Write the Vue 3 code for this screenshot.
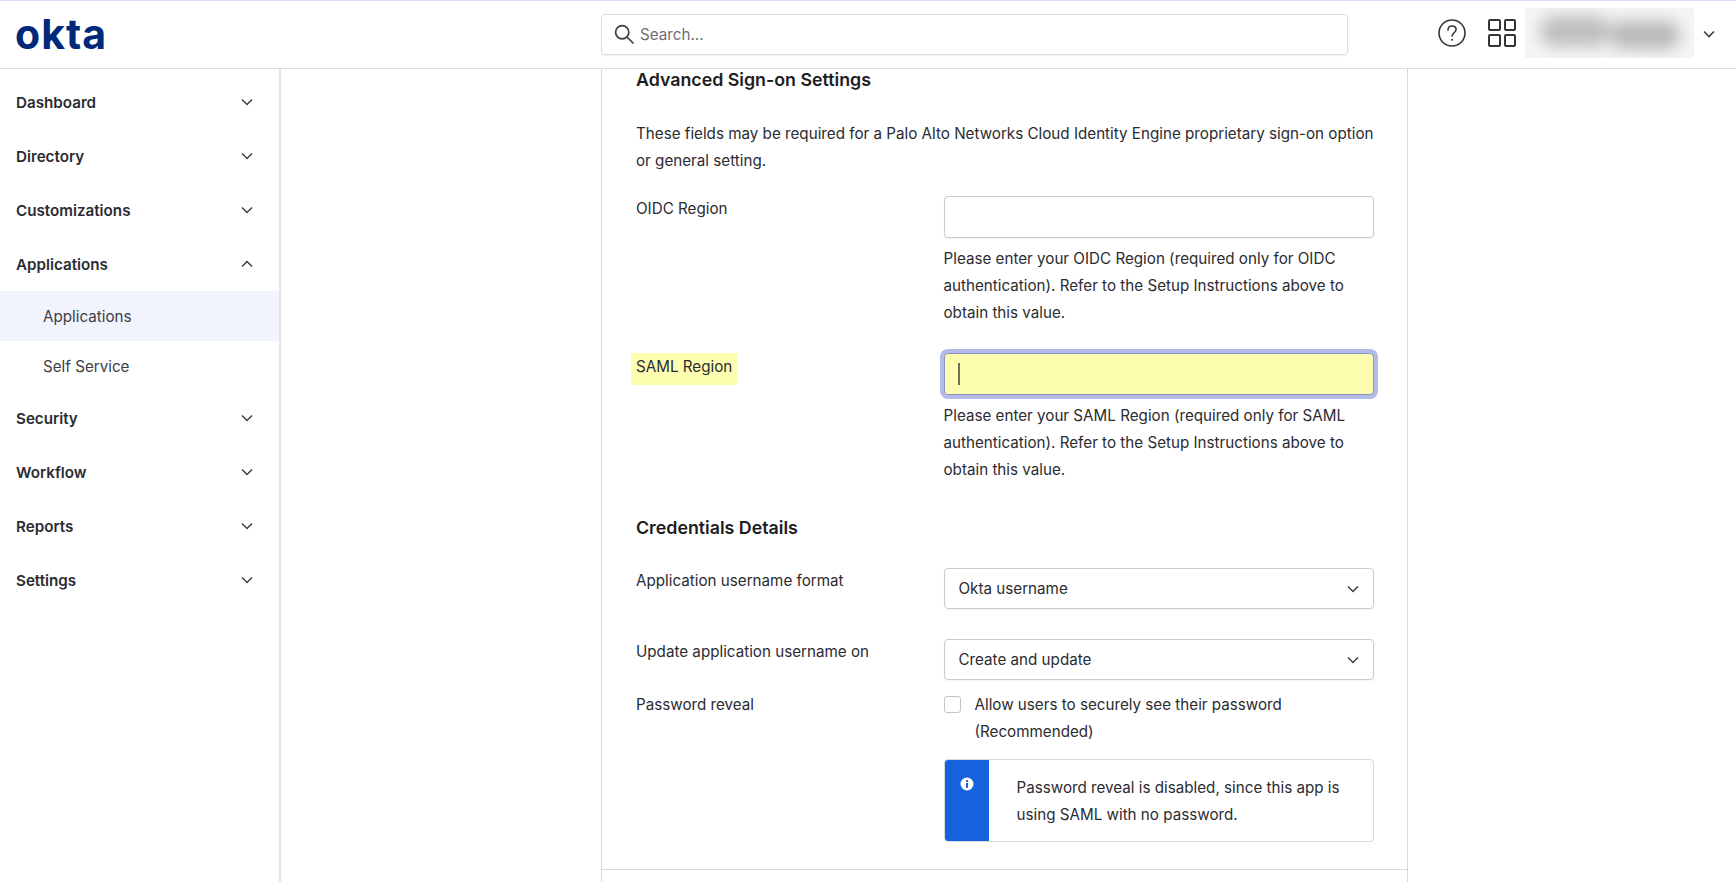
<script setup>
const navTop = [
  { label: 'Dashboard' },
  { label: 'Directory' },
  { label: 'Customizations' },
]
const navBottom = [
  { label: 'Security' },
  { label: 'Workflow' },
  { label: 'Reports' },
  { label: 'Settings' },
]
</script>

<template>
  <div class="page">
    <header class="topbar">
      <div class="logo">okta</div>
      <div class="search">
        <svg class="search-icon" viewBox="0 0 20 20" fill="none" stroke="#3c3f47" stroke-width="1.7">
          <circle cx="8.2" cy="8.2" r="6.6" />
          <path d="M13 13l6 6" stroke-linecap="round" />
        </svg>
        <span>Search...</span>
      </div>
      <div class="top-actions">
        <svg class="help-icon" viewBox="0 0 28 28" fill="none" stroke="#33353b">
          <circle cx="14" cy="14" r="13" stroke-width="1.6" />
          <path d="M10 11c0-2.400 1.800-4 4.100-4s4 1.500 4 3.600c0 3-4 3.300-4 6.400" stroke-width="1.6" stroke-linecap="round" />
          <circle cx="14.100" cy="20.700" r="1" fill="#33353b" stroke="none" />
        </svg>
        <div class="apps">
          <span></span><span></span><span></span><span></span>
        </div>
        <div class="user-box">
          <div class="user-blur">
            <span class="blob-a"></span>
            <span class="blob-b"></span>
          </div>
        </div>
        <svg class="chev user-chev" viewBox="0 0 12 8" fill="none" stroke="#3c3f47" stroke-width="1.6">
          <path d="M1 1.500l5 5 5-5" />
        </svg>
      </div>
    </header>

    <div class="body-row">
      <nav class="sidebar">
        <div v-for="item in navTop" :key="item.label" class="nav-item">
          <span>{{ item.label }}</span>
          <svg class="chev" viewBox="0 0 12 8" fill="none" stroke="#3c3f47" stroke-width="1.500"><path d="M1 1.500l5 5 5-5" /></svg>
        </div>
        <div class="nav-item">
          <span>Applications</span>
          <svg class="chev" viewBox="0 0 12 8" fill="none" stroke="#3c3f47" stroke-width="1.500"><path d="M1 6.500l5-5 5 5" /></svg>
        </div>
        <div class="sub-item active">Applications</div>
        <div class="sub-item">Self Service</div>
        <div v-for="item in navBottom" :key="item.label" class="nav-item">
          <span>{{ item.label }}</span>
          <svg class="chev" viewBox="0 0 12 8" fill="none" stroke="#3c3f47" stroke-width="1.500"><path d="M1 1.500l5 5 5-5" /></svg>
        </div>
      </nav>

      <main class="main">
        <section class="card">
          <div class="card-body">
            <h2 class="title">Advanced Sign-on Settings</h2>
            <p class="intro">These fields may be required for a Palo Alto Networks Cloud Identity Engine proprietary sign-on option or general setting.</p>

            <div class="row row-oidc">
              <label class="field-label">OIDC Region</label>
              <div class="field">
                <div class="input"></div>
                <p class="hint">Please enter your OIDC Region (required only for OIDC authentication). Refer to the Setup Instructions above to obtain this value.</p>
              </div>
            </div>

            <div class="row row-saml">
              <label class="field-label"><span class="mark">SAML Region</span></label>
              <div class="field">
                <div class="input focused"><i class="caret"></i></div>
                <p class="hint">Please enter your SAML Region (required only for SAML authentication). Refer to the Setup Instructions above to obtain this value.</p>
              </div>
            </div>

            <h2 class="title cred-title">Credentials Details</h2>

            <div class="row row-sel1">
              <label class="field-label">Application username format</label>
              <div class="field">
                <div class="select">
                  <span>Okta username</span>
                  <svg class="chev" viewBox="0 0 12 8" fill="none" stroke="#3c3f47" stroke-width="1.500"><path d="M1 1.500l5 5 5-5" /></svg>
                </div>
              </div>
            </div>

            <div class="row row-sel2">
              <label class="field-label">Update application username on</label>
              <div class="field">
                <div class="select">
                  <span>Create and update</span>
                  <svg class="chev" viewBox="0 0 12 8" fill="none" stroke="#3c3f47" stroke-width="1.500"><path d="M1 1.500l5 5 5-5" /></svg>
                </div>
              </div>
            </div>

            <div class="row row-pass">
              <label class="field-label pass-label">Password reveal</label>
              <div class="field">
                <div class="check-row">
                  <span class="checkbox"></span>
                  <span class="check-text">Allow users to securely see their password (Recommended)</span>
                </div>
                <div class="notice">
                  <div class="notice-side">
                    <svg class="info" viewBox="0 0 14 14">
                      <circle cx="7" cy="7" r="6.500" fill="#fff" />
                      <rect x="6" y="6" width="2" height="4.800" fill="#1662dd" />
                      <rect x="6" y="3.200" width="2" height="1.800" fill="#1662dd" />
                    </svg>
                  </div>
                  <p class="notice-text">Password reveal is disabled, since this app is using SAML with no password.</p>
                </div>
              </div>
            </div>
          </div>
          <div class="card-next"></div>
        </section>
      </main>
    </div>
  </div>
</template>

<style>
html, body {
  margin: 0;
  background: #fff;
  overflow: hidden;
}
</style>

<style scoped>
.page {
  width: 1736px;
  height: 882px;
  overflow: hidden;
  display: flex;
  flex-direction: column;
  font-family: Inter, "Liberation Sans", sans-serif;
  font-size: 15.200px;
  color: #2b2c31;
  background: #fff;
}

.topbar {
  height: 67px;
  flex: none;
  display: flex;
  align-items: center;
  border-top: 1px solid #d6dff2;
  border-bottom: 1px solid #dcdcdf;
}
.logo {
  width: 601px;
  padding-left: 15px;
  box-sizing: border-box;
  font-size: 41px;
  font-weight: 700;
  letter-spacing: 1px;
  line-height: 40px;
  color: #00297a;
  margin-top: -2px;
  flex: none;
}
.search {
  width: 747px;
  height: 41px;
  margin-top: -1px;
  box-sizing: border-box;
  border: 1px solid #dcdcdf;
  border-radius: 4px;
  display: flex;
  align-items: center;
  padding-left: 12px;
  color: #6e6e78;
  box-shadow: 0 1px 2px rgba(0, 0, 0, 0.05);
}
.search-icon {
  width: 20px;
  height: 20px;
  margin-right: 6px;
}
.top-actions {
  display: flex;
  align-items: center;
  margin-left: 90px;
  margin-top: -4px;
}
.help-icon {
  width: 28px;
  height: 28px;
}
.apps {
  width: 28px;
  height: 28px;
  margin-left: 22px;
  display: grid;
  grid-template-columns: 1fr 1fr;
  gap: 3px;
}
.apps span {
  border: 2px solid #33353b;
  border-radius: 2px;
}
.user-box {
  width: 169px;
  height: 50px;
  margin-left: 9px;
  overflow: hidden;
  background: #f5f5f5;
}
.user-blur {
  height: 100%;
  display: flex;
  align-items: center;
  justify-content: center;
  filter: blur(8px);
}
.blob-a {
  width: 70px;
  height: 30px;
  background: #bdbdbd;
  border-radius: 14px;
  margin-top: -3px;
}
.blob-b {
  width: 70px;
  height: 28px;
  background: #b8b8b8;
  border-radius: 14px;
  margin-top: 5px;
}
.chev {
  width: 12px;
  height: 8px;
  flex: none;
}
.user-chev {
  margin-left: 9px;
  margin-top: 2px;
}

.body-row {
  flex: 1;
  display: flex;
  min-height: 0;
}
.sidebar {
  width: 281px;
  flex: none;
  box-sizing: border-box;
  border-right: 2px solid #e4e4e6;
  padding-top: 6px;
}
.nav-item {
  height: 54px;
  display: flex;
  align-items: center;
  justify-content: space-between;
  padding: 0 26px 0 16px;
  font-weight: 600;
  color: #2b2c31;
}
.sub-item {
  height: 50px;
  display: flex;
  align-items: center;
  padding-left: 43px;
  color: #3d3e46;
}
.sub-item.active {
  background: #f1f3fd;
}

.main {
  flex: 1;
  padding-left: 320px;
  min-width: 0;
}
.card {
  width: 807px;
  height: 100%;
  box-sizing: border-box;
  border-left: 1px solid #d8d8dc;
  border-right: 1px solid #d8d8dc;
  display: flex;
  flex-direction: column;
}
.card-body {
  padding: 0 33px 27px 34px;
  border-bottom: 1px solid #d8d8dc;
}
.title {
  margin: 0;
  font-size: 17.800px;
  line-height: 22px;
  font-weight: 600;
  color: #1d1d21;
}
.intro {
  margin: 29px 0 0;
  line-height: 27px;
}
.row {
  display: grid;
  grid-template-columns: 307.500px 430px;
}
.row-oidc {
  margin-top: 22px;
}
.row-saml {
  margin-top: 27px;
}
.cred-title {
  margin-top: 34px;
}
.row-sel1 {
  margin-top: 29px;
}
.row-sel2 {
  margin-top: 30px;
}
.row-pass {
  margin-top: 11px;
}
.field-label {
  line-height: 24px;
  padding-top: 1px;
}
.pass-label {
  line-height: 27px;
  padding-top: 0;
}
.mark {
  display: inline-block;
  background: #fdfdb0;
  margin: -1px 0 0 -5px;
  padding: 0 5px 4px;
  line-height: 28px;
}
.input {
  height: 42px;
  box-sizing: border-box;
  border: 1px solid #c9c9ce;
  border-radius: 4px;
  box-shadow: 0 1px 2px rgba(0, 0, 0, 0.06);
  background: #fff;
}
.input.focused {
  border-color: #8d93c4;
  background: #fdfdb0;
  box-shadow: 0 0 0 4px #b3bbe9;
  display: flex;
  align-items: center;
  padding-left: 13px;
}
.caret {
  width: 2px;
  height: 22px;
  background: #6f6f58;
}
.hint {
  margin: 7px 0 0;
  line-height: 27px;
}
.select {
  height: 41px;
  box-sizing: border-box;
  border: 1px solid #c9c9ce;
  border-radius: 4px;
  display: flex;
  align-items: center;
  justify-content: space-between;
  padding: 0 14px;
  box-shadow: 0 1px 2px rgba(0, 0, 0, 0.05);
}
.check-row {
  display: flex;
  line-height: 27px;
}
.checkbox {
  width: 17px;
  height: 17px;
  flex: none;
  box-sizing: border-box;
  border: 1.500px solid #c4c4c9;
  border-radius: 3px;
  margin: 5px 14px 0 0;
}
.notice {
  margin-top: 14px;
  height: 83px;
  box-sizing: border-box;
  border: 1px solid #d8d8dc;
  border-radius: 4px;
  display: flex;
  overflow: hidden;
}
.notice-side {
  width: 44px;
  flex: none;
  background: #1662dd;
  display: flex;
  justify-content: center;
  padding-top: 17px;
  box-sizing: border-box;
}
.info {
  width: 14px;
  height: 14px;
}
.notice-text {
  margin: 0;
  padding: 14px 28px 0 28px;
  line-height: 27px;
}
.card-next {
  flex: 1;
}
</style>
